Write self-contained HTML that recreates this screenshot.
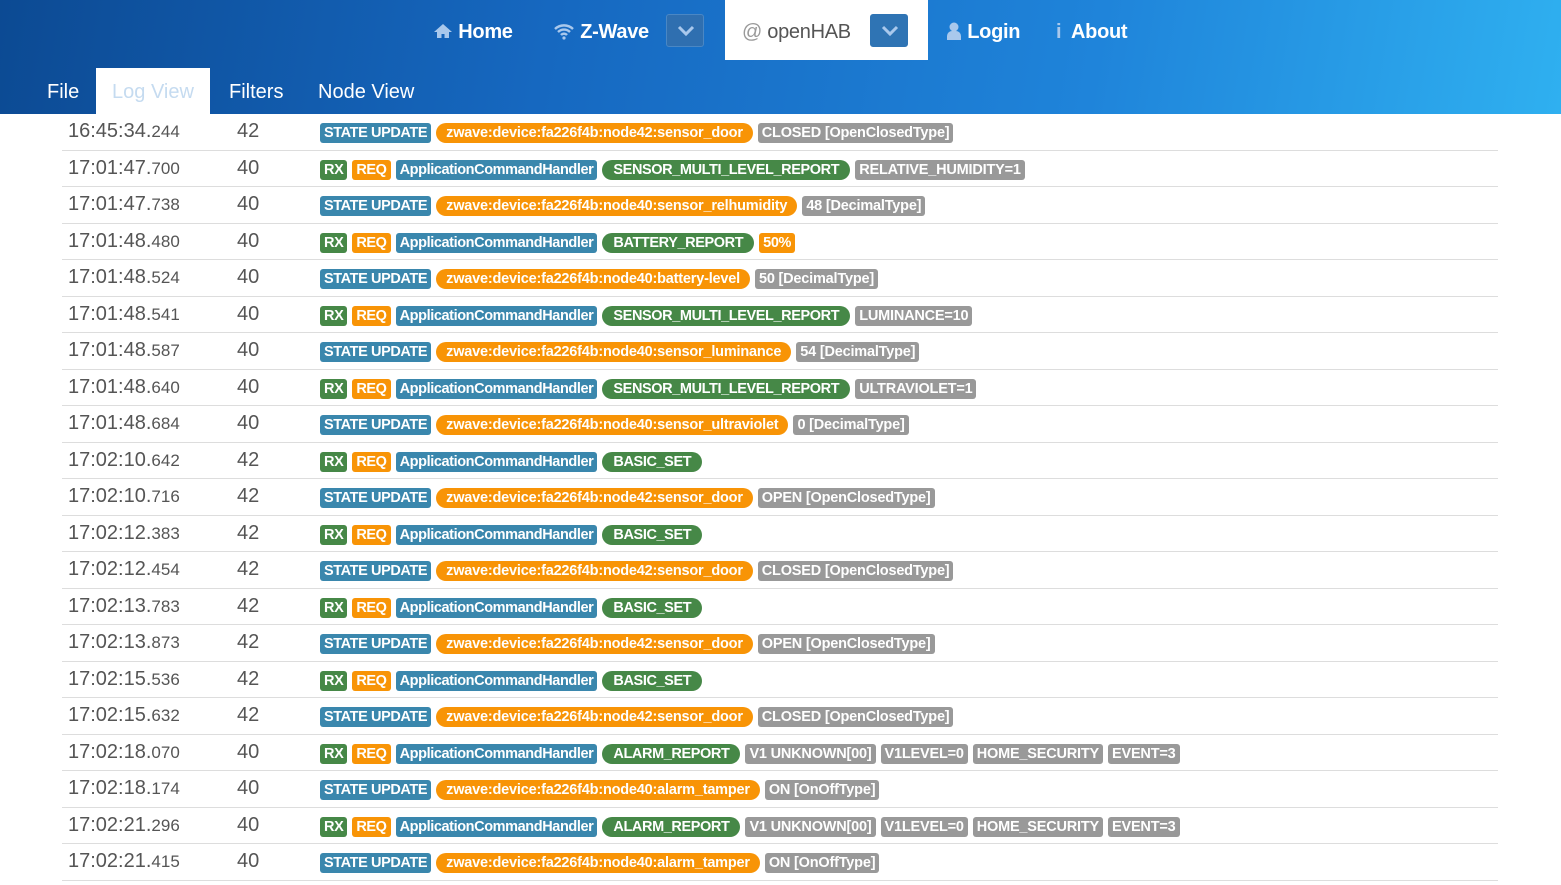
<!DOCTYPE html><html><head><meta charset="utf-8"><style>
body{margin:0;width:1561px;height:885px;overflow:hidden;background:#fff;font-family:"Liberation Sans",sans-serif}
.hd{position:absolute;left:0;top:0;width:1561px;height:114px;background:linear-gradient(100deg,#0c4a93 0%,#1668c0 35%,#1f84da 70%,#2fb0f0 100%)}
.nav{position:absolute;top:0;height:60px;line-height:64px;color:#fff;font-size:20px;font-weight:bold;letter-spacing:-0.3px}
.dd{position:absolute;top:14px;width:38px;height:33px;border-radius:3px;background:#2f6fb0;border:1px solid #4a87c4;box-sizing:border-box}
.dd svg{position:absolute;left:9px;top:9px}
.tab{position:absolute;top:68px;height:46px;line-height:48px;font-size:20px;color:#fff}
.rows{position:absolute;left:62px;top:114px;width:1436px}
.row{height:35.5px;border-bottom:1px solid #ddd;position:relative}
.t{position:absolute;left:6px;top:6px;font-size:20px;color:#555}
.t small{font-size:17px}
.n{position:absolute;left:175px;top:6px;font-size:20px;color:#555}
.l{position:absolute;left:258px;top:9px;white-space:nowrap;font-size:0}
.l span{display:inline-block;height:20px;line-height:20px;font-size:14.5px;font-weight:bold;color:#fff;padding:0 4px;border-radius:3px;margin-right:5px;letter-spacing:-0.4px;vertical-align:top}
.b{background:#3a87ad}.x{background:#468847}.r{background:#f89406}.y{background:#999}
.l .y{letter-spacing:-0.2px}
.o{background:#f89406;border-radius:10px!important;padding:0 10px!important;letter-spacing:-0.2px!important}
.g{background:#468847;border-radius:10px!important;padding:0 11px!important}
</style></head><body>
<div class="hd">
<div class="nav" style="left:433px"><svg width="20" height="16" viewBox="0 0 20 16" style="vertical-align:-1px"><path d="M10 1L1 9h3v6h4.5v-4h3v4H16V9h3z" fill="#a9c8ec"/></svg> Home</div>
<div class="nav" style="left:553px"><svg width="22" height="18" viewBox="0 0 22 18" style="vertical-align:-2px"><path d="M2 7a13 13 0 0 1 18 0M5 10a8.5 8.5 0 0 1 12 0M8 13a4 4 0 0 1 6 0" stroke="#a9c8ec" stroke-width="2.4" fill="none"/><circle cx="11" cy="16" r="1.6" fill="#a9c8ec"/></svg> Z-Wave</div>
<div class="dd" style="left:666px"><svg width="20" height="14"><path d="M3 3l7 7 7-7" stroke="#a9c8ec" stroke-width="3" fill="none"/></svg></div>
<div style="position:absolute;left:725px;top:0;width:203px;height:60px;background:#fff"></div>
<div class="nav" style="left:742px;color:#555;font-weight:normal"><span style="color:#999">@</span> openHAB</div>
<div class="dd" style="left:870px;background:#2f74b4;border-color:#2f74b4"><svg width="20" height="14"><path d="M3 3l7 7 7-7" stroke="#a9c8ec" stroke-width="3" fill="none"/></svg></div>
<div class="nav" style="left:946px"><svg width="16" height="18" viewBox="0 0 16 18" style="vertical-align:-2px"><circle cx="8" cy="5" r="4.5" fill="#a9c8ec"/><path d="M1 18v-4a5 5 0 0 1 5-5h4a5 5 0 0 1 5 5v4z" fill="#a9c8ec"/></svg> Login</div>
<div class="nav" style="left:1056px"><span style="color:#a9c8ec">i</span>&nbsp; About</div>
<div class="tab" style="left:47px">File</div>
<div class="tab" style="left:96px;width:114px;background:#fff;color:#c5dbf0;text-align:center">Log View</div>
<div class="tab" style="left:229px">Filters</div>
<div class="tab" style="left:318px">Node View</div>
</div>
<div class="rows">
<div class="row"><div class="t">16:45:34.<small>244</small></div><div class="n">42</div><div class="l"><span class="b">STATE UPDATE</span><span class="o">zwave:device:fa226f4b:node42:sensor_door</span><span class="y">CLOSED [OpenClosedType]</span></div></div>
<div class="row"><div class="t">17:01:47.<small>700</small></div><div class="n">40</div><div class="l"><span class="x">RX</span><span class="r">REQ</span><span class="b">ApplicationCommandHandler</span><span class="g">SENSOR_MULTI_LEVEL_REPORT</span><span class="y">RELATIVE_HUMIDITY=1</span></div></div>
<div class="row"><div class="t">17:01:47.<small>738</small></div><div class="n">40</div><div class="l"><span class="b">STATE UPDATE</span><span class="o">zwave:device:fa226f4b:node40:sensor_relhumidity</span><span class="y">48 [DecimalType]</span></div></div>
<div class="row"><div class="t">17:01:48.<small>480</small></div><div class="n">40</div><div class="l"><span class="x">RX</span><span class="r">REQ</span><span class="b">ApplicationCommandHandler</span><span class="g">BATTERY_REPORT</span><span class="r">50%</span></div></div>
<div class="row"><div class="t">17:01:48.<small>524</small></div><div class="n">40</div><div class="l"><span class="b">STATE UPDATE</span><span class="o">zwave:device:fa226f4b:node40:battery-level</span><span class="y">50 [DecimalType]</span></div></div>
<div class="row"><div class="t">17:01:48.<small>541</small></div><div class="n">40</div><div class="l"><span class="x">RX</span><span class="r">REQ</span><span class="b">ApplicationCommandHandler</span><span class="g">SENSOR_MULTI_LEVEL_REPORT</span><span class="y">LUMINANCE=10</span></div></div>
<div class="row"><div class="t">17:01:48.<small>587</small></div><div class="n">40</div><div class="l"><span class="b">STATE UPDATE</span><span class="o">zwave:device:fa226f4b:node40:sensor_luminance</span><span class="y">54 [DecimalType]</span></div></div>
<div class="row"><div class="t">17:01:48.<small>640</small></div><div class="n">40</div><div class="l"><span class="x">RX</span><span class="r">REQ</span><span class="b">ApplicationCommandHandler</span><span class="g">SENSOR_MULTI_LEVEL_REPORT</span><span class="y">ULTRAVIOLET=1</span></div></div>
<div class="row"><div class="t">17:01:48.<small>684</small></div><div class="n">40</div><div class="l"><span class="b">STATE UPDATE</span><span class="o">zwave:device:fa226f4b:node40:sensor_ultraviolet</span><span class="y">0 [DecimalType]</span></div></div>
<div class="row"><div class="t">17:02:10.<small>642</small></div><div class="n">42</div><div class="l"><span class="x">RX</span><span class="r">REQ</span><span class="b">ApplicationCommandHandler</span><span class="g">BASIC_SET</span></div></div>
<div class="row"><div class="t">17:02:10.<small>716</small></div><div class="n">42</div><div class="l"><span class="b">STATE UPDATE</span><span class="o">zwave:device:fa226f4b:node42:sensor_door</span><span class="y">OPEN [OpenClosedType]</span></div></div>
<div class="row"><div class="t">17:02:12.<small>383</small></div><div class="n">42</div><div class="l"><span class="x">RX</span><span class="r">REQ</span><span class="b">ApplicationCommandHandler</span><span class="g">BASIC_SET</span></div></div>
<div class="row"><div class="t">17:02:12.<small>454</small></div><div class="n">42</div><div class="l"><span class="b">STATE UPDATE</span><span class="o">zwave:device:fa226f4b:node42:sensor_door</span><span class="y">CLOSED [OpenClosedType]</span></div></div>
<div class="row"><div class="t">17:02:13.<small>783</small></div><div class="n">42</div><div class="l"><span class="x">RX</span><span class="r">REQ</span><span class="b">ApplicationCommandHandler</span><span class="g">BASIC_SET</span></div></div>
<div class="row"><div class="t">17:02:13.<small>873</small></div><div class="n">42</div><div class="l"><span class="b">STATE UPDATE</span><span class="o">zwave:device:fa226f4b:node42:sensor_door</span><span class="y">OPEN [OpenClosedType]</span></div></div>
<div class="row"><div class="t">17:02:15.<small>536</small></div><div class="n">42</div><div class="l"><span class="x">RX</span><span class="r">REQ</span><span class="b">ApplicationCommandHandler</span><span class="g">BASIC_SET</span></div></div>
<div class="row"><div class="t">17:02:15.<small>632</small></div><div class="n">42</div><div class="l"><span class="b">STATE UPDATE</span><span class="o">zwave:device:fa226f4b:node42:sensor_door</span><span class="y">CLOSED [OpenClosedType]</span></div></div>
<div class="row"><div class="t">17:02:18.<small>070</small></div><div class="n">40</div><div class="l"><span class="x">RX</span><span class="r">REQ</span><span class="b">ApplicationCommandHandler</span><span class="g">ALARM_REPORT</span><span class="y">V1 UNKNOWN[00]</span><span class="y">V1LEVEL=0</span><span class="y">HOME_SECURITY</span><span class="y">EVENT=3</span></div></div>
<div class="row"><div class="t">17:02:18.<small>174</small></div><div class="n">40</div><div class="l"><span class="b">STATE UPDATE</span><span class="o">zwave:device:fa226f4b:node40:alarm_tamper</span><span class="y">ON [OnOffType]</span></div></div>
<div class="row"><div class="t">17:02:21.<small>296</small></div><div class="n">40</div><div class="l"><span class="x">RX</span><span class="r">REQ</span><span class="b">ApplicationCommandHandler</span><span class="g">ALARM_REPORT</span><span class="y">V1 UNKNOWN[00]</span><span class="y">V1LEVEL=0</span><span class="y">HOME_SECURITY</span><span class="y">EVENT=3</span></div></div>
<div class="row"><div class="t">17:02:21.<small>415</small></div><div class="n">40</div><div class="l"><span class="b">STATE UPDATE</span><span class="o">zwave:device:fa226f4b:node40:alarm_tamper</span><span class="y">ON [OnOffType]</span></div></div>
</div>
</body></html>
